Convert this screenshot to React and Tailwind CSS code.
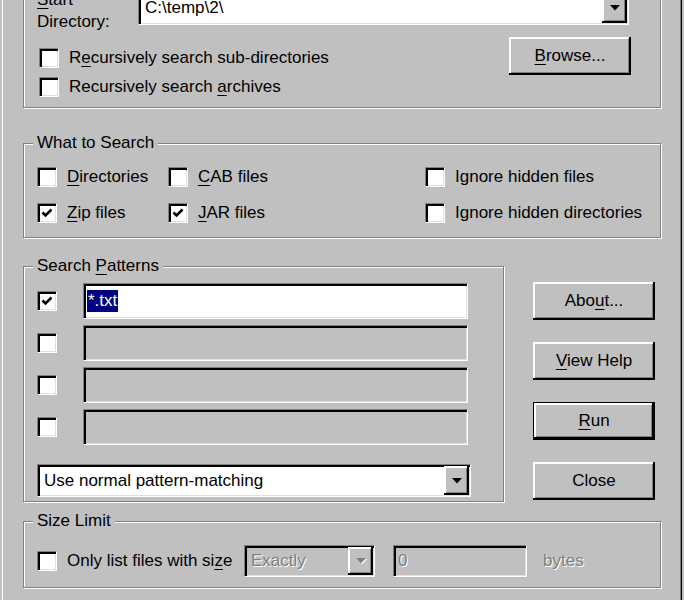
import React from 'react';

// Win98-style bevels
const raised =
  'shadow-[inset_-2px_-2px_0_#000,inset_2px_2px_0_#fff,inset_-3px_-3px_0_#808080]';
const sunken =
  'border border-t-[#808080] border-l-[#808080] border-b-white border-r-white shadow-[inset_2px_2px_0_#000,inset_-1px_-1px_0_#dfdfdf]';
const disabledText = 'text-[#808080] [text-shadow:1px_1px_0_#fff]';

function U({ children }) {
  return <span className="underline decoration-1 underline-offset-[3px]">{children}</span>;
}

function Box({ checked }) {
  return (
    <span className={`flex h-[20px] w-[20px] shrink-0 items-center justify-center bg-white ${sunken}`}>
      {checked && (
        <svg width="14" height="14" viewBox="0 0 14 14">
          <path d="M2.5 6.5 L5.5 9.5 L11.5 3.5" fill="none" stroke="#000" strokeWidth="2.6" />
        </svg>
      )}
    </span>
  );
}

function Check({ checked, children }) {
  return (
    <div className="flex h-[22px] items-center gap-[10px]">
      <Box checked={checked} />
      <span className="whitespace-nowrap">{children}</span>
    </div>
  );
}

function Arrow({ disabled }) {
  return (
    <svg width="10" height="6" viewBox="0 0 10 6" className={disabled ? 'drop-shadow-[1px_1px_0_#fff]' : ''}>
      <polygon points="0,0 10,0 5,5.5" fill={disabled ? '#808080' : '#000'} />
    </svg>
  );
}

function Combo({ text, disabled, className }) {
  return (
    <div className={`flex items-stretch p-[1px] ${sunken} ${disabled ? 'bg-[#c0c0c0]' : 'bg-white'} ${className}`}>
      <span className={`flex flex-1 items-center pl-[5px] ${disabled ? disabledText : ''}`}>{text}</span>
      <span className={`flex w-[25px] items-center justify-center bg-[#c0c0c0] ${raised}`}>
        <Arrow disabled={disabled} />
      </span>
    </div>
  );
}

function Btn({ children, isDefault, className = '' }) {
  if (isDefault) {
    return (
      <div className={`flex h-[38px] w-[122px] border border-black ${className}`}>
        <div className={`flex flex-1 items-center justify-center ${raised}`}>{children}</div>
      </div>
    );
  }
  return (
    <div className={`flex h-[38px] w-[122px] items-center justify-center ${raised} ${className}`}>
      {children}
    </div>
  );
}

function Group({ label, className = '', children }) {
  return (
    <div className={`relative w-[638px] shrink-0 border border-[#808080] shadow-[inset_1px_1px_0_#fff,1px_1px_0_#fff] ${className}`}>
      {label && (
        <span className="absolute left-[9px] top-[-12px] bg-[#c0c0c0] px-[4px] leading-[22px] whitespace-nowrap">
          {label}
        </span>
      )}
      {children}
    </div>
  );
}

function Field({ white, children }) {
  return (
    <div className={`flex h-[36px] w-[385px] items-center pl-[3px] ${sunken} ${white ? 'bg-white' : 'bg-[#c0c0c0]'}`}>
      {children}
    </div>
  );
}

export default function App() {
  const patterns = [true, false, false, false];

  return (
    <div className="h-[600px] w-[684px] overflow-hidden bg-[#c0c0c0] font-['Liberation_Sans',Arial,sans-serif] text-[17px] leading-[22px] text-black">
      <div className="ml-[2px] flex h-[640px] w-[679px] flex-col border-l border-r border-l-white border-r-[#808080] pl-[20px] shadow-[1px_0_0_#000]">
        {/* Start directory */}
        <Group className="-mt-[30px] h-[138px] pl-[13px] pt-[18px]">
          <div className="flex items-start">
            <div className="w-[101px]">
              <U>S</U>tart
              <br />
              Directory:
            </div>
            <Combo className="mt-[1px] h-[35px] w-[491px]" text="C:\temp\2\" />
          </div>
          <div className="mt-[4px] flex items-start">
            <div className="ml-[2px] mt-[10px] flex flex-col gap-[7px]">
              <Check>
                R<U>e</U>cursively search sub-directories
              </Check>
              <Check>
                Recursively search <U>a</U>rchives
              </Check>
            </div>
            <Btn className="ml-auto mr-[29px]">
              <span>
                <U>B</U>rowse...
              </span>
            </Btn>
          </div>
        </Group>

        {/* What to search */}
        <Group label="What to Search" className="mt-[35px] h-[95px] pl-[13px] pt-[22px]">
          <div className="grid grid-cols-[131px_257px_auto] gap-y-[14px]">
            <Check>
              <U>D</U>irectories
            </Check>
            <Check>
              <U>C</U>AB files
            </Check>
            <Check>Ignore hidden files</Check>
            <Check checked>
              <U>Z</U>ip files
            </Check>
            <Check checked>
              <U>J</U>AR files
            </Check>
            <Check>Ignore hidden directories</Check>
          </div>
        </Group>

        {/* Patterns + buttons */}
        <div className="mt-[28px] flex items-start">
          <Group
            label={
              <>
                Search <U>P</U>atterns
              </>
            }
            className="!w-[481px] h-[236px] pl-[13px] pt-[16px]"
          >
            <div className="flex flex-col gap-[6px]">
              {patterns.map((checked, i) => (
                <div key={i} className="flex items-center gap-[26px]">
                  <Box checked={checked} />
                  <Field white={i === 0}>
                    {i === 0 && <span className="bg-[#000080] px-[1px] text-white">*.txt</span>}
                  </Field>
                </div>
              ))}
            </div>
            <Combo className="mt-[19px] h-[33px] w-[434px]" text="Use normal pattern-matching" />
          </Group>
          <div className="ml-[29px] mt-[16px] flex flex-col gap-[22px]">
            <Btn>
              <span>
                Abo<U>u</U>t...
              </span>
            </Btn>
            <Btn>
              <span>
                <U>V</U>iew Help
              </span>
            </Btn>
            <Btn isDefault>
              <span>
                <U>R</U>un
              </span>
            </Btn>
            <Btn>Close</Btn>
          </div>
        </div>

        {/* Size limit */}
        <Group label="Size Limit" className="mt-[19px] h-[67px] pl-[13px] pt-[23px]">
          <div className="flex items-center">
            <div className="w-[207px]">
              <Check>
                Only list files with si<U>z</U>e
              </Check>
            </div>
            <Combo disabled className="h-[32px] w-[131px]" text="Exactly" />
            <div className={`ml-[18px] flex h-[32px] w-[134px] items-center bg-[#c0c0c0] pl-[4px] ${sunken}`}>
              <span className={disabledText}>0</span>
            </div>
            <span className={`ml-[16px] ${disabledText}`}>bytes</span>
          </div>
        </Group>
      </div>
    </div>
  );
}
